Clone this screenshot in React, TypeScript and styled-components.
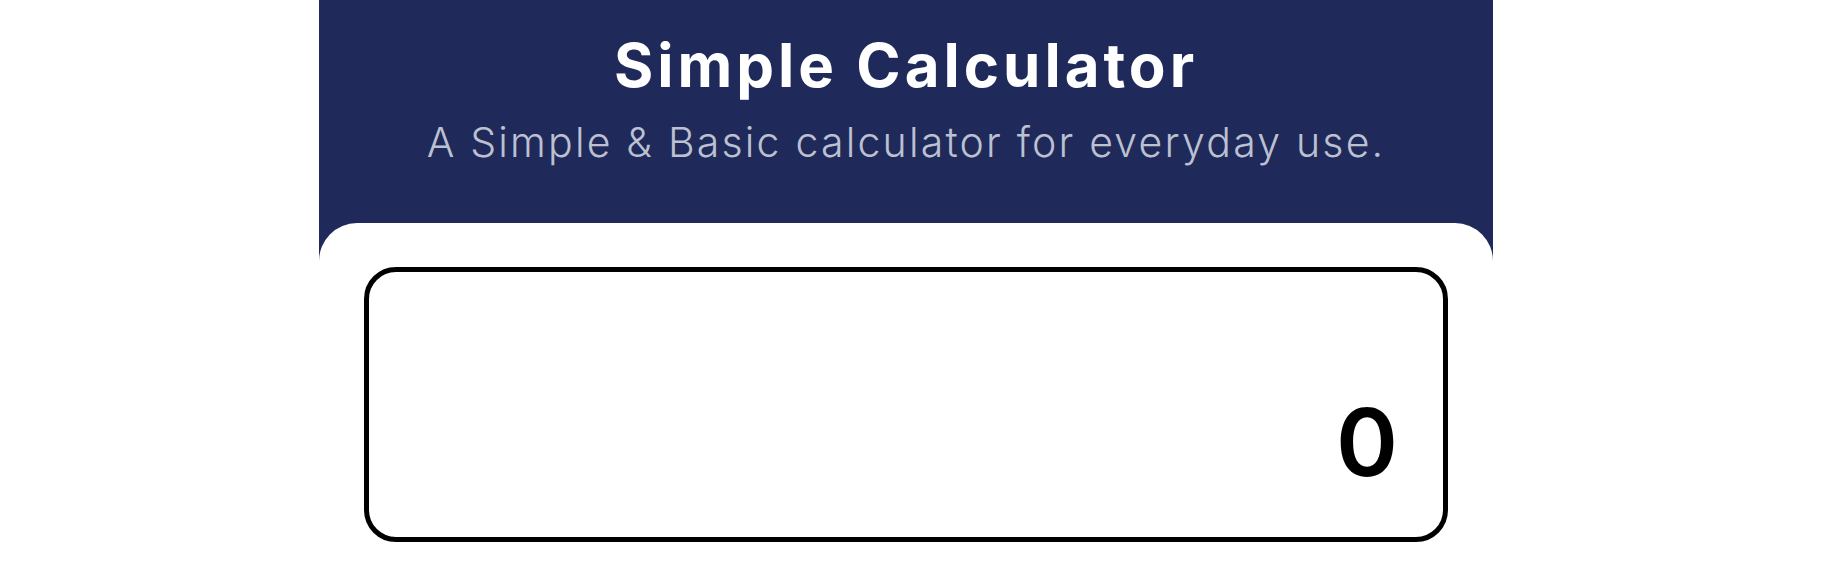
import React, { useState } from "react";
import styled, { createGlobalStyle } from "styled-components";

const GlobalStyle = createGlobalStyle`
  * {
    box-sizing: border-box;
  }
  body {
    margin: 0;
    background: #ffffff;
    font-family: Inter, "Noto Sans", Arial, sans-serif;
  }
`;

const Shell = styled.main`
  width: 1174px;
  margin-left: 319px;
`;

const Header = styled.header`
  background: #1f2a5b;
  height: 262px;
  padding-top: 29px;
  text-align: center;
`;

const Title = styled.h1`
  margin: 0;
  color: #ffffff;
  font-size: 60px;
  font-weight: 700;
  line-height: 1.2;
  letter-spacing: 4px;
`;

const Subtitle = styled.p`
  margin: 17px 0 0;
  color: #bcc0d0;
  font-size: 41px;
  font-weight: 300;
  line-height: 1.2;
  letter-spacing: 2.2px;
`;

const Card = styled.section`
  position: relative;
  margin-top: -39px;
  background: #ffffff;
  border-radius: 38px 38px 0 0;
  padding: 44px 45px 0;
`;

const Display = styled.div`
  height: 275px;
  border: 5px solid #000000;
  border-radius: 32px;
  display: flex;
  align-items: flex-end;
  justify-content: flex-end;
  padding: 0 45px 48px;
`;

const Readout = styled.span`
  color: #000000;
  font-size: 94px;
  font-weight: 600;
  line-height: 1;
`;

export default function App() {
  const [value] = useState("0");

  return (
    <>
      <GlobalStyle />
      <Shell>
        <Header>
          <Title>Simple Calculator</Title>
          <Subtitle>A Simple &amp; Basic calculator for everyday use.</Subtitle>
        </Header>
        <Card>
          <Display>
            <Readout>{value}</Readout>
          </Display>
        </Card>
      </Shell>
    </>
  );
}
